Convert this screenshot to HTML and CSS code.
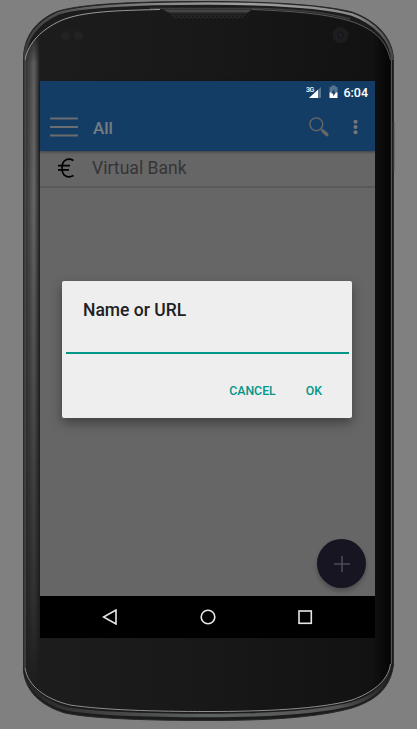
FILE: index.html
```html
<!DOCTYPE html>
<html lang="en">
<head>
<meta charset="utf-8">
<title>Virtual Bank</title>
<link rel="stylesheet" href="styles.css">
</head>
<body>
<main class="stage">
  <svg class="device" width="417" height="729" viewBox="0 0 417 729" aria-hidden="true">
    <defs>
      <linearGradient id="topband" x1="23" y1="0" x2="394" y2="0" gradientUnits="userSpaceOnUse">
        <stop offset="0" stop-color="#3a3a3a"/><stop offset=".12" stop-color="#555"/><stop offset=".35" stop-color="#858585"/><stop offset=".6" stop-color="#a0a0a0"/><stop offset=".9" stop-color="#8a8a8a"/><stop offset="1" stop-color="#444"/>
      </linearGradient>
      <linearGradient id="bottomband" x1="23" y1="0" x2="394" y2="0" gradientUnits="userSpaceOnUse">
        <stop offset="0" stop-color="#222"/><stop offset=".15" stop-color="#3a3a3a"/><stop offset=".5" stop-color="#5e6262"/><stop offset=".85" stop-color="#555"/><stop offset="1" stop-color="#1c1c1c"/>
      </linearGradient>
      <linearGradient id="side" x1="25" y1="0" x2="40" y2="0" gradientUnits="userSpaceOnUse">
        <stop offset="0" stop-color="#333"/><stop offset=".3" stop-color="#4a4a4a"/><stop offset=".6" stop-color="#686868"/><stop offset=".8" stop-color="#444"/><stop offset="1" stop-color="#1a1a1a"/>
      </linearGradient>
      <linearGradient id="fade" x1="0" y1="30" x2="0" y2="690" gradientUnits="userSpaceOnUse">
        <stop offset="0" stop-color="#fff" stop-opacity="0"/><stop offset=".05" stop-color="#fff" stop-opacity=".9"/><stop offset=".25" stop-color="#fff"/><stop offset=".85" stop-color="#fff" stop-opacity=".3"/><stop offset="1" stop-color="#fff" stop-opacity="0"/>
      </linearGradient>
      <linearGradient id="face" x1="0" y1="0" x2="1" y2="0">
        <stop offset="0" stop-color="#1d1d1d"/><stop offset=".5" stop-color="#181818"/><stop offset=".95" stop-color="#121212"/><stop offset="1" stop-color="#050505"/>
      </linearGradient>
      <mask id="sidemask"><rect x="20" y="30" width="22" height="660" fill="url(#fade)"/></mask>
      <clipPath id="inner"><path d="M25 60C28 42 43 29 60 21C82 11 120 10.500 160 9.500H252C290 11 325 13.500 350 21C374 29 386 40 390.500 60V664C388 682 371 693 352 700C320 709 265 711.500 207 711.500C155 711.500 103 710 70 705C45 699 28 686 25 668Z"/></clipPath>
      <pattern id="mesh" width="4" height="4" patternUnits="userSpaceOnUse"><rect width="4" height="4" fill="#232323"/><rect width="1" height="1" fill="#101010"/><rect x="2" y="2" width="1" height="1" fill="#101010"/></pattern>
    </defs>
    <path d="M23.500 58C24 37 35 21 57 11.500C83 3 145 1.500 207 1.500C270 1.500 325 5 352 12C377 21 393 38 393.500 60V664C391 687 377 700 352 708C316 718 265 720.500 207 720.500C155 720.500 92 719 65 713C41 706 23.500 690 23.500 668Z" fill="#1c1c1c" stroke="#292929"/>
    <path d="M24.500 58C26 37 37 23 58 13.500C84 5 145 3.500 207 3.500C270 3.500 325 7 352 14.500C375 23 391 39 392.500 60" fill="none" stroke="url(#topband)" stroke-width="2.500"/>
    <path d="M150 8.500H252C290 9 325 12 350 19" fill="none" stroke="#3d3d3d" stroke-width="1.500"/>
    <path d="M392 664C389 684 375 697 352 704C316 713 265 715.500 207 715.500C155 715.500 98 714 67 709C44 703 26 688 24.500 668" fill="none" stroke="url(#bottomband)" stroke-width="3.500"/>
    <path d="M25 60C28 42 43 29 60 21C82 11 120 10.500 160 9.500H252C290 11 325 13.500 350 21C374 29 386 40 390.500 60V664C388 682 371 693 352 700C320 709 265 711.500 207 711.500C155 711.500 103 710 70 705C45 699 28 686 25 668Z" fill="url(#face)"/>
    <g clip-path="url(#inner)"><rect x="25" y="30" width="15" height="660" fill="url(#side)" mask="url(#sidemask)"/></g>
    <path d="M25 60C28 42 43 29 60 21C82 11 120 10.500 160 9.500" fill="none" stroke="#a8a8a8" stroke-width=".9"/>
    <path d="M252 9.500C290 11 325 13.500 350 21C374 29 386 40 390.500 60" fill="none" stroke="#595959"/>
    <path d="M390.500 664C388 682 371 693 352 700C320 709 265 711.500 207 711.500C155 711.500 103 710 70 705C45 699 28 686 25 668" fill="none" stroke="#8e8e8e"/>
    <path d="M25 60V668" stroke="#5b5b5b"/>
    <path d="M391.500 60V664" stroke="#555"/>
    <path d="M393.500 122V171" stroke="#333" stroke-width="1.500"/>
    <path d="M163 9.500H252L248 12Q244 18.500 239 18.500H177Q172 18.500 170 14Z" fill="url(#mesh)"/>
    <path d="M163 9.500H252L248 12.500H169Z" fill="#454545"/>
    <circle cx="65.500" cy="35.500" r="4.500" fill="#222"/><circle cx="78.500" cy="35.500" r="4.500" fill="#222"/>
    <circle cx="340.500" cy="35" r="8" fill="#1d1d1d"/><circle cx="340.500" cy="35" r="3.500" fill="#17171d"/><circle cx="340.500" cy="35" r="1.300" fill="#23233d"/>
  </svg>

  <section class="screen">
    <header class="header">
      <div class="status">
        <svg width="16" height="14" viewBox="0 0 16 14"><path d="M15 2V13H3Z" fill="#58758f"/><path d="M12 4.700V13H3Z" fill="#fff"/><text class="net" x="0" y="6.500">3G</text></svg>
        <svg class="battery" width="9" height="14" viewBox="0 0 9 14"><path d="M2.500 .5H6.500V2H8.500V8H.5V2H2.500Z" fill="#58758f"/><path d="M.5 7.500H8.500V13H.5Z" fill="#fff"/><path d="M5.300 4L2.200 8.600H4.200V11.200L7 7.300H5.300Z" fill="#143d65"/></svg>
        <span class="clock">6:04</span>
      </div>
      <div class="toolbar">
        <svg width="28" height="20" viewBox="0 0 28 20"><path d="M0 1.500H28M0 10H28M0 18.500H28" stroke="#6a6d70" stroke-width="2.200"/></svg>
        <h1 class="title">All</h1>
        <svg class="search" width="20" height="20" viewBox="0 0 20 20" fill="none" stroke="#666"><circle cx="7.300" cy="7.300" r="6.400" stroke-width="1.400"/><path d="M11.800 11.800L14 14" stroke-width="1.500"/><path d="M14.200 14.200L17.800 17.600" stroke-width="3.500" stroke-linecap="round"/></svg>
        <svg class="more" width="5" height="16" viewBox="0 0 5 16" fill="#777"><circle cx="2.500" cy="2.700" r="2"/><circle cx="2.500" cy="8" r="2"/><circle cx="2.500" cy="13.300" r="2"/></svg>
      </div>
    </header>
    <div class="account">
      <svg width="17" height="20" viewBox="0 0 17 20" fill="none" stroke="#000" stroke-width="1.700"><path d="M15.500 2.500C10 -.5 4 1.500 4 10C4 18.500 10 20.500 15.500 17.500M0 7.700H12M0 11.800H11"/></svg>
      <span class="name">Virtual Bank</span>
    </div>
    <div class="content">
      <div class="fab"><svg width="16" height="16" viewBox="0 0 16 16"><path d="M8 0V16M0 8H16" stroke="#4c4b54" stroke-width="1.600"/></svg></div>
    </div>
    <nav class="nav">
      <svg width="16" height="16" viewBox="0 0 16 16"><path d="M14 1V15L1.500 8Z"/></svg>
      <svg width="16" height="16" viewBox="0 0 16 16"><circle cx="8" cy="8" r="6.800"/></svg>
      <svg width="16" height="16" viewBox="0 0 16 16"><rect x="2" y="2" width="12.300" height="12.300"/></svg>
    </nav>
    <div class="dialog">
      <h2 class="prompt">Name or URL</h2>
      <div class="field"></div>
      <div class="actions"><span>CANCEL</span><span>OK</span></div>
    </div>
  </section>
</main>
</body>
</html>
```
FILE: styles.css
```css
* { box-sizing: border-box; }
body { margin: 0; background: #808080; font-family: Roboto, sans-serif; }
svg { display: block; flex: none; }
.stage { position: relative; width: 417px; height: 729px; padding: 81px 42px 91px 40px; overflow: hidden; }
.device { position: absolute; inset: 0; }
.screen { position: relative; width: 335px; height: 557px; display: flex; flex-direction: column; background: #666; }
.header { height: 70px; background: #143d65; box-shadow: 0 1px 3px rgba(0,0,0,.4); z-index: 1; }
.status { height: 23px; display: flex; align-items: center; justify-content: flex-end; padding: 0 7px 1px 0; }
.net { font: 500 7px Roboto, sans-serif; fill: #fff; letter-spacing: -.4px; }
.battery { margin: 0 5px 0 7px; }
.clock { color: #fff; font-size: 12.5px; font-weight: 500; line-height: 23px; }
.toolbar { height: 46px; display: flex; align-items: center; padding: 0 17px 0 10px; }
.title { margin: 2px 0 0 15px; font-size: 17px; font-weight: 500; line-height: 20px; color: #777d81; }
.search { margin-left: auto; }
.more { margin-left: 24px; }
.account { height: 37px; display: flex; align-items: center; padding: 0 0 1px 18px; border-bottom: 2px solid #595959; }
.name { margin-left: 17px; font-size: 17.6px; line-height: 20px; color: #353535; }
.content { flex: 1; display: flex; align-items: flex-end; justify-content: flex-end; padding: 0 9px 8px; }
.fab { width: 49px; height: 49px; border-radius: 50%; background: #171522; display: grid; place-items: center; box-shadow: 0 3px 4px rgba(0,0,0,.25); }
.nav { height: 42px; background: #000; display: flex; align-items: center; justify-content: space-between; padding: 0 62px; }
.nav svg { fill: none; stroke: #e8e8e8; stroke-width: 1.6; }
.dialog { position: absolute; left: 22px; top: 200px; width: 290px; height: 137px; padding: 18px 3px 0 4px; background: #eee; border-radius: 2px; box-shadow: 0 5px 12px rgba(0,0,0,.38); }
.prompt { margin: 0 0 0 17px; font-size: 17.5px; font-weight: 500; line-height: 22px; color: #212121; }
.field { height: 33px; border-bottom: 2px solid #009688; }
.actions { display: flex; justify-content: flex-end; gap: 30px; padding: 27px 27px 0 0; font-size: 12.3px; font-weight: 500; line-height: 20px; color: #009688; }
```
